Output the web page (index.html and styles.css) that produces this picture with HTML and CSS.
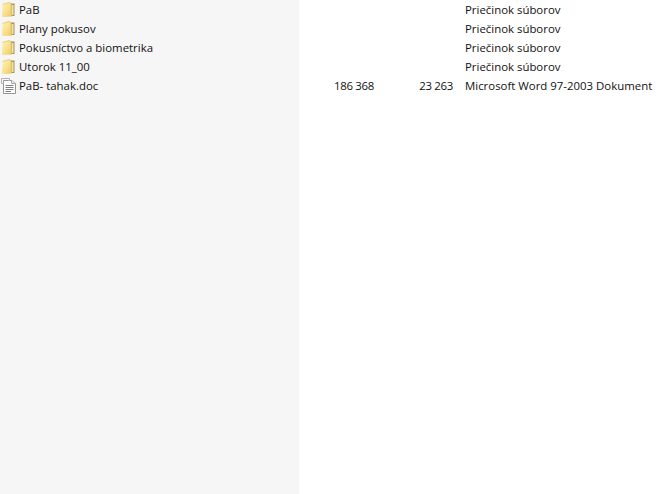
FILE: index.html
```
<!DOCTYPE html>
<html lang="sk">
<head>
<meta charset="utf-8">
<title>Súbory</title>
<link rel="stylesheet" href="styles.css">
</head>
<body>
<svg class="defs" width="0" height="0" aria-hidden="true">
  <defs>
    <linearGradient id="fg" x1="0" y1="0" x2="1" y2="1">
      <stop offset="0" stop-color="#fdf3bd"/>
      <stop offset="0.55" stop-color="#f8e08c"/>
      <stop offset="1" stop-color="#ecc565"/>
    </linearGradient>
    <symbol id="folder" viewBox="0 0 16 16">
      <path d="M10 1.5 L14.5 1.5 L14.5 14 L10 14 Z" fill="#a8954f"/>
      <path d="M11.5 3 L13.5 3 L13.5 13 L11.5 13 Z" fill="#f0e4b4"/>
      <path d="M2.5 2.5 L9 0.5 L11 1.5 L11.5 14.5 L3 15 Q2 15 2 14 Z" fill="url(#fg)"/>
      <path d="M2.5 2.5 L9 0.5 L11 1.5 L11.5 14.5" fill="none" stroke="#e5bd55" stroke-width="0.7"/>
    </symbol>
    <symbol id="doc" viewBox="0 0 16 16">
      <path d="M3.5 2.5 H11.5 L15.5 5.5 V15.5 H3.5 Z" fill="#fff" stroke="#959595"/>
      <path d="M11.5 2.5 V5.5 H15.5" fill="#eee" stroke="#a5a5a5"/>
      <path d="M1.5 0.5 H9.5 V2.5 M1.5 0.5 V5.5 H3.5" fill="#fafafa" stroke="#b0b0b0"/>
      <path d="M5.5 7.5 H13.5 M5.5 9.5 H13.5 M5.5 11.5 H13.5 M5.5 13.5 H11" stroke="#808080" fill="none"/>
    </symbol>
  </defs>
</svg>
<main class="page">
  <section class="side">
    <div class="name"><svg class="icon"><use href="#folder"/></svg><span>PaB</span></div>
    <div class="name"><svg class="icon"><use href="#folder"/></svg><span>Plany pokusov</span></div>
    <div class="name"><svg class="icon"><use href="#folder"/></svg><span>Pokusníctvo a biometrika</span></div>
    <div class="name"><svg class="icon"><use href="#folder"/></svg><span>Utorok 11_00</span></div>
    <div class="name"><svg class="icon"><use href="#doc"/></svg><span>PaB- tahak.doc</span></div>
  </section>
  <section class="details">
    <div class="row"><span class="num"></span><span class="num"></span><span class="type">Priečinok súborov</span></div>
    <div class="row"><span class="num"></span><span class="num"></span><span class="type">Priečinok súborov</span></div>
    <div class="row"><span class="num"></span><span class="num"></span><span class="type">Priečinok súborov</span></div>
    <div class="row"><span class="num"></span><span class="num"></span><span class="type">Priečinok súborov</span></div>
    <div class="row"><span class="num">186 368</span><span class="num">23 263</span><span class="type">Microsoft Word 97-2003 Dokument</span></div>
  </section>
</main>
</body>
</html>
```
FILE: styles.css
```
html, body {
  margin: 0;
  height: 100%;
  background: #fff;
}
body {
  font-family: "Open Sans", "Noto Sans", sans-serif;
  font-size: 11.42px;
  color: #111;
  overflow: hidden;
}
.defs {
  display: block;
  height: 0;
}
.page {
  display: flex;
  height: 100%;
}
.side {
  width: 299px;
  background: #f6f6f6;
}
.name {
  display: flex;
  align-items: center;
  height: 19px;
  gap: 3px;
}
.icon {
  width: 16px;
  height: 16px;
  flex: none;
}
.details {
  flex: 1;
}
.row {
  display: grid;
  grid-template-columns: 75px 79px auto;
  align-items: center;
  height: 19px;
}
.num {
  text-align: right;
  letter-spacing: -0.25px;
  word-spacing: -0.4px;
}
.type {
  margin-left: 12px;
  white-space: nowrap;
}
```
